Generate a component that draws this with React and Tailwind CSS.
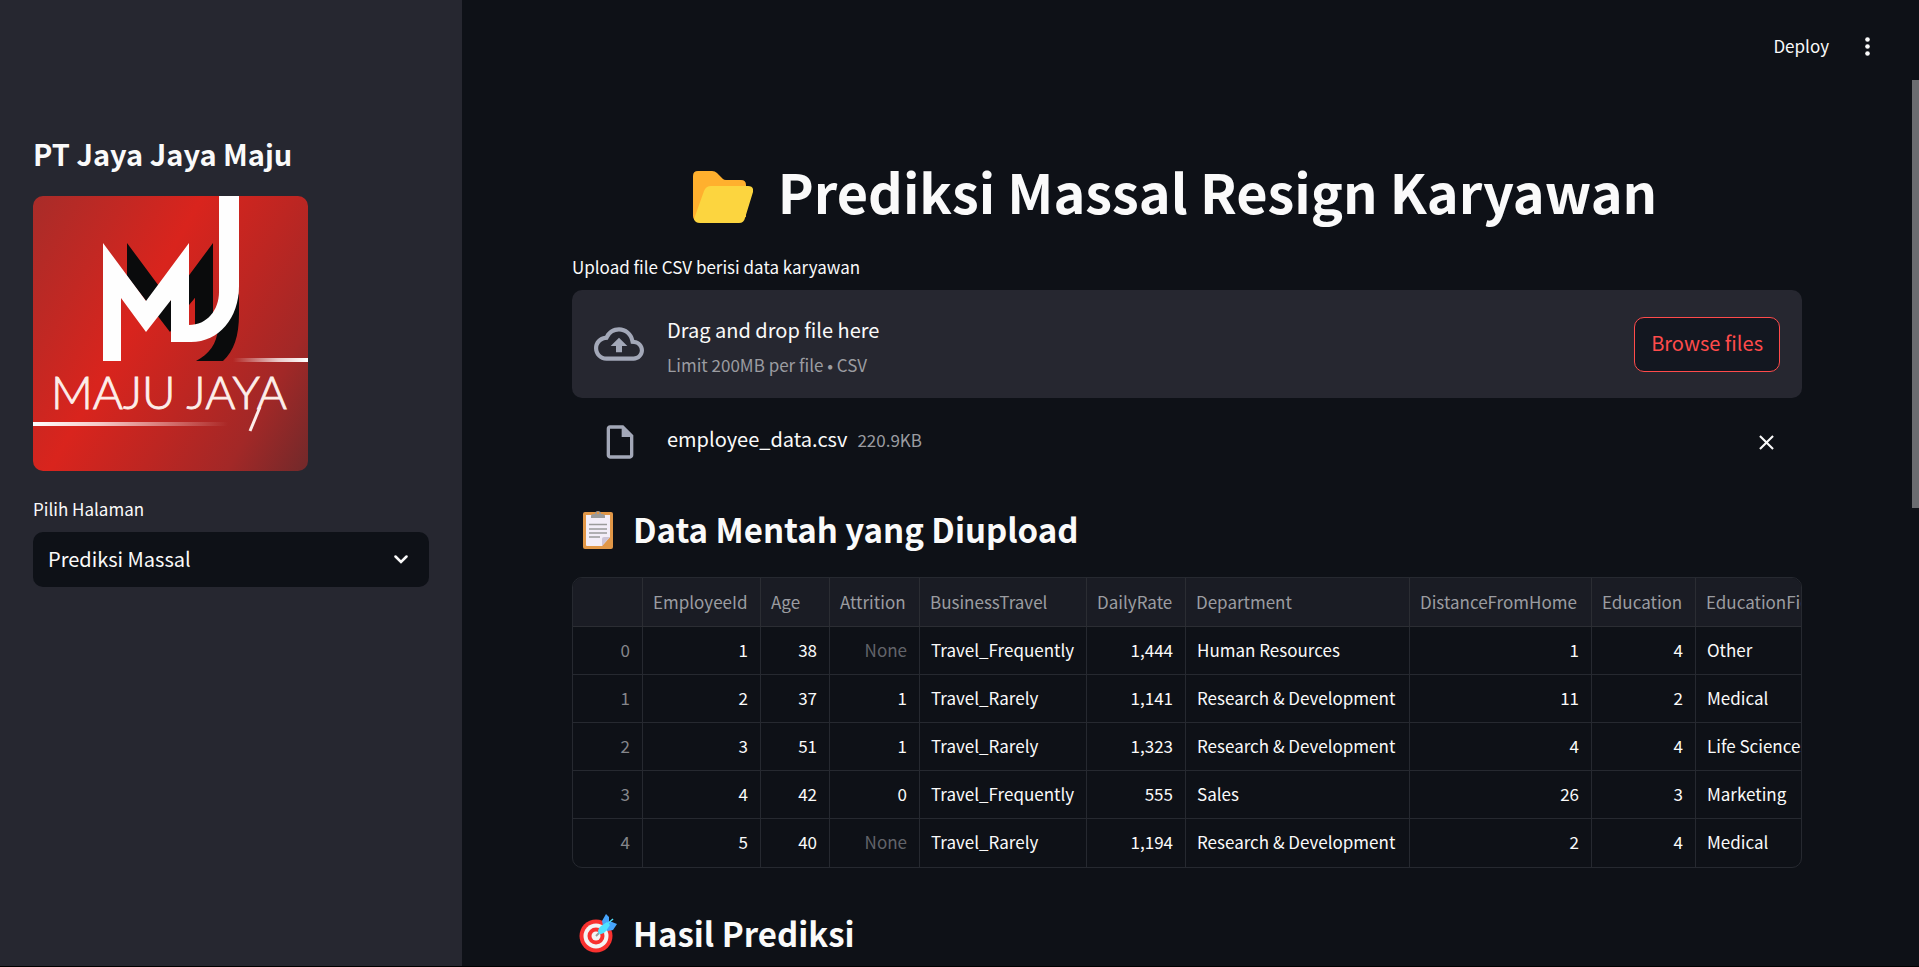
import React from "react";
import {
  MdClose,
  MdOutlineCloudUpload,
  MdOutlineInsertDriveFile,
} from "react-icons/md";

const columns = [
  { name: "", width: "w-[70px]", align: "text-right" },
  { name: "EmployeeId", width: "w-[118px]", align: "text-right" },
  { name: "Age", width: "w-[69px]", align: "text-right" },
  { name: "Attrition", width: "w-[90px]", align: "text-right" },
  { name: "BusinessTravel", width: "w-[167px]", align: "text-left" },
  { name: "DailyRate", width: "w-[99px]", align: "text-right" },
  { name: "Department", width: "w-[224px]", align: "text-left" },
  { name: "DistanceFromHome", width: "w-[182px]", align: "text-right" },
  { name: "Education", width: "w-[104px]", align: "text-right" },
  { name: "EducationField", width: "w-[150px]", align: "text-left" },
];

const rows = [
  ["0", "1", "38", "None", "Travel_Frequently", "1,444", "Human Resources", "1", "4", "Other"],
  ["1", "2", "37", "1", "Travel_Rarely", "1,141", "Research & Development", "11", "2", "Medical"],
  ["2", "3", "51", "1", "Travel_Rarely", "1,323", "Research & Development", "4", "4", "Life Sciences"],
  ["3", "4", "42", "0", "Travel_Frequently", "555", "Sales", "26", "3", "Marketing"],
  ["4", "5", "40", "None", "Travel_Rarely", "1,194", "Research & Development", "2", "4", "Medical"],
];

function CompanyLogo() {
  return (
    <svg viewBox="0 0 275 275" role="img" aria-label="Maju Jaya" className="block size-[275px] rounded-[10px]">
      <defs>
        <linearGradient id="logo-red" gradientUnits="userSpaceOnUse" x1="0" y1="0" x2="323" y2="180">
          <stop offset="0" stopColor="#a82c29" />
          <stop offset="0.22" stopColor="#c22823" />
          <stop offset="0.4" stopColor="#d9241d" />
          <stop offset="0.62" stopColor="#bd2622" />
          <stop offset="0.82" stopColor="#a22827" />
          <stop offset="1" stopColor="#74292a" />
        </linearGradient>
        <linearGradient id="logo-line-right" gradientUnits="userSpaceOnUse" x1="200" y1="0" x2="275" y2="0">
          <stop offset="0" stopColor="#fff" stopOpacity="0" />
          <stop offset="0.6" stopColor="#fff" stopOpacity="0.75" />
          <stop offset="1" stopColor="#fff" />
        </linearGradient>
        <linearGradient id="logo-line-left" gradientUnits="userSpaceOnUse" x1="0" y1="0" x2="195" y2="0">
          <stop offset="0" stopColor="#fff" />
          <stop offset="0.35" stopColor="#fff" stopOpacity="0.75" />
          <stop offset="1" stopColor="#fff" stopOpacity="0" />
        </linearGradient>
      </defs>
      <rect width="275" height="275" fill="url(#logo-red)" />
      <path
        fill="#0a0b0c"
        d="M94 47L137 105L180 47V120L206 98V118C206 140 201 155 190 165H163C176 158 184 148 185 132L162 136V102L137 136L94 80Z"
      />
      <path fill="#d0241f" d="M156 109L162 102V127L156 130Z" />
      <path
        fill="#fefefe"
        d="M70 47L113 105L156 47V129C174 129 186 114 186 96V0H206V90C206 122 186 146 158 146H138V104L113 136L88 102V165H70Z"
      />
      <rect x="200" y="162" width="75" height="4" fill="url(#logo-line-right)" />
      <rect x="0" y="226" width="195" height="4" fill="url(#logo-line-left)" />
      <text
        x="18"
        y="213"
        fill="#fdeeea"
        stroke="#fdeeea"
        strokeWidth="0.9"
        fontFamily="Lato, sans-serif"
        fontWeight="300"
        fontSize="46"
      >
        MAJU JAYA
      </text>
      <path d="M227 211L217 235" stroke="#fdeeea" strokeWidth="3" />
    </svg>
  );
}

function FolderEmoji() {
  return (
    <svg viewBox="0 0 60 52" aria-hidden="true" className="mt-3 h-[52px] w-[60px] shrink-0">
      <path fill="#ffb02e" d="M0 5Q0 0 5 0H19Q22 0 24 2L30 8Q31 9 33 9H48Q53 9 53 14V46L6 51Q0 50 0 45Z" />
      <path fill="#fcd53f" d="M11 20Q13 15 18 15H55Q61 15 60 21L52 47Q51 52 46 52H7Q2 52 1 48Z" />
    </svg>
  );
}

function ClipboardEmoji() {
  return (
    <svg viewBox="0 0 30 39" aria-hidden="true" className="h-[39px] w-[30px] shrink-0">
      <rect y="2" width="30" height="37" rx="2" fill="#e19747" />
      <path fill="#f3eef8" d="M3 5H27V27L19 36H4Q3 36 3 35Z" />
      <path fill="#cdc4d6" d="M27 27L19 36V29Q19 27 21 27Z" />
      <path fill="#9b9b9b" d="M8 8V6Q8 4 11 4H12A3 3 0 0 1 18 4H19Q22 4 22 6V8Z" />
      <circle cx="15" cy="3" r="1.300" fill="#e19747" />
      <path stroke="#9b9b9b" strokeWidth="1.400" d="M6 14.500H24M6 19H24M6 23H24M6 27H17" />
    </svg>
  );
}

function TargetEmoji() {
  return (
    <svg viewBox="0 0 39 39" aria-hidden="true" className="size-[39px] shrink-0">
      <circle cx="17" cy="22" r="16.500" fill="#f8312f" />
      <circle cx="17" cy="22" r="12.500" fill="#f4f4f4" />
      <circle cx="17" cy="22" r="8.500" fill="#f8312f" />
      <circle cx="17" cy="22" r="4.500" fill="#f4f4f4" />
      <path stroke="#9b9b9b" strokeWidth="2" d="M17 22L22 17" />
      <path fill="#46a4fb" d="M24 12L23 7L27 0L30 3V8H33L38 10L34 16L28 17Z" />
      <path fill="#50e2ff" d="M19 17Q19 14 22 12L28 8L31 11L27 17Q24 21 20 20Z" />
      <path stroke="#50e2ff" strokeWidth="1.500" d="M26 12L34 5" />
    </svg>
  );
}

function Sidebar() {
  return (
    <aside className="w-[462px] shrink-0 bg-[#262730] px-[33px] pt-[133px]">
      <h2 className="text-[29px] leading-[40px] font-bold">PT Jaya Jaya Maju</h2>
      <div className="mt-[23px]">
        <CompanyLogo />
      </div>
      <label htmlFor="page" className="mt-[25px] block text-[17px] leading-[25px]">
        Pilih Halaman
      </label>
      <div className="mt-[11px] grid items-center">
        <select
          id="page"
          className="col-start-1 row-start-1 h-[55px] w-full appearance-none rounded-[10px] bg-[#0e1117] px-[15px] pb-[2px] text-[20px]"
        >
          <option>Prediksi Massal</option>
        </select>
        <svg
          viewBox="0 0 14 9"
          aria-hidden="true"
          className="pointer-events-none col-start-1 row-start-1 mr-[21px] h-[9px] w-[14px] justify-self-end"
        >
          <path d="M1.500 1.500L7 7L12.500 1.500" fill="none" stroke="#fafafa" strokeWidth="2.500" strokeLinecap="round" />
        </svg>
      </div>
    </aside>
  );
}

function Uploader() {
  return (
    <section>
      <label htmlFor="csv" className="block text-[17px] leading-[25px]">
        Upload file CSV berisi data karyawan
      </label>
      <input id="csv" type="file" accept=".csv" className="sr-only" />
      <div className="mt-[11px] flex h-[108px] items-center rounded-[10px] bg-[#262730] px-[22px]">
        <MdOutlineCloudUpload className="size-[50px] text-[#a3a8b8]" />
        <div className="ml-[23px] flex-1 pt-[5px] leading-[35px]">
          <p className="text-[20px]">Drag and drop file here</p>
          <p className="text-[17px] text-[#9b9ca1]">Limit 200MB per file • CSV</p>
        </div>
        <button
          type="button"
          className="h-[55px] rounded-[10px] border border-[#ff4b4b] bg-[#131720] px-4 pb-[2px] text-[20px] text-[#ff4b4b]"
        >
          Browse files
        </button>
      </div>
      <div className="mt-[24px] flex h-10 items-center pr-[23px] pl-[28px]">
        <MdOutlineInsertDriveFile className="size-10 text-[#a3a8b8]" />
        <div className="ml-[27px] flex flex-1 items-baseline gap-[10px] pb-[6px]">
          <span className="text-[20px] leading-[36px]">employee_data.csv</span>
          <span className="text-[17px] text-[#9b9ca1]">220.9KB</span>
        </div>
        <button type="button" aria-label="Remove file">
          <MdClose className="size-[25px]" />
        </button>
      </div>
    </section>
  );
}

function DataTable() {
  return (
    <div className="overflow-hidden rounded-[10px] border border-[#262930]">
      <table className="w-[1273px] table-fixed border-separate border-spacing-0 text-[17px] leading-[24px] whitespace-nowrap">
        <thead className="bg-[#1a1c24] text-[#9b9ca1]">
          <tr>
            {columns.map((c) => (
              <th
                key={c.name}
                scope="col"
                className={`${c.width} h-[49px] border-r border-b border-[#2b2d33] px-[10px] text-left font-normal`}
              >
                {c.name}
              </th>
            ))}
          </tr>
        </thead>
        <tbody>
          {rows.map((row, r) => (
            <tr key={row[0]}>
              {row.map((value, i) => (
                <td
                  key={columns[i].name}
                  className={`h-[48px] border-r border-[#262930] pr-[12px] pb-[2px] pl-[11px] ${r < rows.length - 1 ? "border-b" : ""} ${columns[i].align} ${
                    i === 0 ? "text-[#85868b]" : value === "None" ? "text-[#62646a]" : ""
                  }`}
                >
                  {value}
                </td>
              ))}
            </tr>
          ))}
        </tbody>
      </table>
    </div>
  );
}

export default function App() {
  return (
    <div className="flex h-screen overflow-hidden border-b border-black bg-[#0e1117] font-['Noto_Sans_CJK_JP',sans-serif] text-[#fafafa]">
      <Sidebar />
      <div className="flex min-w-0 flex-1 flex-col">
        <header className="flex h-20 shrink-0 items-start justify-end gap-9 pt-[33px] pr-[49px]">
          <button type="button" className="text-[17px] leading-[25px]">
            Deploy
          </button>
          <button type="button" aria-label="Menu" className="pt-1">
            <svg viewBox="0 0 5 19" aria-hidden="true" className="h-[19px] w-[5px] fill-[#fafafa]">
              <circle cx="2.500" cy="2.500" r="2.300" />
              <circle cx="2.500" cy="9.500" r="2.300" />
              <circle cx="2.500" cy="16.500" r="2.300" />
            </svg>
          </button>
        </header>
        <div className="flex min-h-0 flex-1">
          <main className="min-w-0 flex-1 px-[110px]">
            <h1 className="mt-[73px] flex items-center justify-center gap-[25px] pr-6 text-[54px] leading-[76px] font-bold">
              <FolderEmoji />
              Prediksi Massal Resign Karyawan
            </h1>
            <div className="mt-[25px]">
              <Uploader />
            </div>
            <h2 className="mt-[39px] mb-[19px] flex items-center gap-[20px] pl-[11px] text-[33px] leading-[57px] font-bold">
              <ClipboardEmoji />
              Data Mentah yang Diupload
            </h2>
            <DataTable />
            <h2 className="mt-[37px] flex items-center gap-[15px] pl-[7px] text-[33px] leading-[57px] font-bold">
              <TargetEmoji />
              Hasil Prediksi
            </h2>
          </main>
          <div className="h-[428px] w-[7px] shrink-0 bg-[#6b6c70]" />
        </div>
      </div>
    </div>
  );
}
